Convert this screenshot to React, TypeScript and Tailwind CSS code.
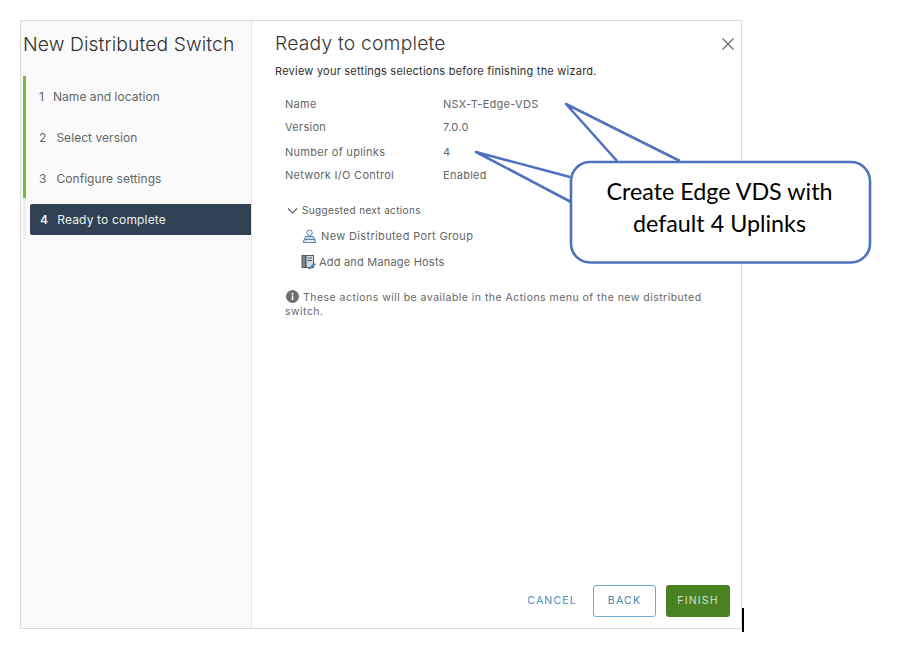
const font = "font-['Inter','Liberation_Sans',sans-serif]";

const steps = [
  { n: 1, label: "Name and location", gap: "gap-[9px]", h: "h-[41px]" },
  { n: 2, label: "Select version", gap: "gap-[10px]", h: "h-[41px]" },
  { n: 3, label: "Configure settings", gap: "gap-[10px]", h: "h-[40px] pt-[1px]" },
];

const summary = [
  { label: "Name", value: "NSX-T-Edge-VDS", h: "h-[23px]" },
  { label: "Version", value: "7.0.0", h: "h-[23px]" },
  { label: "Number of uplinks", value: "4", h: "h-[25px] pt-[1px]" },
  { label: "Network I/O Control", value: "Enabled", h: "h-[23px]" },
];

function PortGroupIcon() {
  return (
    <svg width="15" height="15" viewBox="0 0 15 15" fill="none" className="shrink-0">
      <circle cx="7.5" cy="3.8" r="2.8" fill="#eef3f7" stroke="#5b87ad" strokeWidth="1" />
      <path d="M1 13.5 L3.500 7.500 H11.500 L14 13.500 Z" fill="#c9dbe9" stroke="#5b87ad" strokeWidth="1" strokeLinejoin="round" />
      <path d="M2 10.500 H13" stroke="#5b87ad" strokeWidth="1" />
      <path d="M4 12 H11" stroke="#ffffff" strokeWidth="1" />
    </svg>
  );
}

function HostsIcon() {
  return (
    <svg width="16" height="16" viewBox="0 0 16 16" fill="none" className="shrink-0">
      <rect x="1" y="1.500" width="3.500" height="12" fill="#7d8890" stroke="#4f5a63" strokeWidth="1" />
      <rect x="5" y="1.500" width="7.500" height="12" fill="#d5dadd" stroke="#4f5a63" strokeWidth="1" />
      <path d="M6.500 4 H11 M6.500 6.500 H11" stroke="#4f5a63" strokeWidth="1" />
      <path d="M7 15 L13 8.500 L15 10.500 L9 15.500 Z" fill="#4d86b8" />
    </svg>
  );
}

function Callout() {
  return (
    <div className="absolute left-[470px] top-[95px] h-[175px] w-[405px]">
      <svg width="405" height="175" viewBox="0 0 405 175" fill="none" className="absolute inset-0">
        <path d="M147 67 L96 9 L210 67 Z M101 107 L6 57 L101 83 Z" fill="#ffffff" />
        <rect x="101" y="67" width="299" height="100.500" rx="19" fill="#ffffff" stroke="#4f71be" strokeWidth="2.600" />
        <path
          d="M147 66 L96 9 L210 66 M101 107 L6 57 L100 82"
          stroke="#4f71be"
          strokeWidth="2.600"
          strokeLinejoin="round"
        />
      </svg>
      <div className="absolute left-[101px] top-[67px] flex h-[100px] w-[299px] flex-col items-center justify-center pb-[10px] pr-[2px] font-['Lato',sans-serif] text-[23.300px] leading-[32px] text-black">
        <span>Create Edge VDS with</span>
        <span>default 4 Uplinks</span>
      </div>
    </div>
  );
}

export default function App() {
  return (
    <div className={`relative h-[662px] w-[916px] overflow-hidden bg-white pl-[20px] pt-[20px] ${font}`}>
      <div className="flex h-[609px] w-[722px] border border-[#dcdcdc] bg-white">
        <aside className="flex w-[231px] shrink-0 flex-col border-r border-[#e4e4e4] bg-[#fafafa]">
          <h1 className="ml-[2px] mt-[10px] h-[45px] whitespace-nowrap text-[19.300px] font-light leading-[26px] tracking-[0.1px] text-[#313131]">
            New Distributed Switch
          </h1>
          <div className="ml-[2px] flex flex-col border-l-[3px] border-[#eeeeee]">
            <div className="-ml-[3px] flex h-[122px] flex-col border-l-[3px] border-[#7cb83c] pl-[13px]">
              {steps.map((s) => (
                <div
                  key={s.n}
                  className={`flex ${s.h} items-center ${s.gap} text-[12px] tracking-[0.05px] text-[#666666]`}
                >
                  <span>{s.n}</span>
                  <span>{s.label}</span>
                </div>
              ))}
            </div>
            <div className="ml-[4px] mt-[6px] flex h-[31px] items-center gap-[9px] rounded-l-[2px] bg-[#2f4152] pl-[10px] text-[12px] tracking-[0.17px] text-[#eef1f3]">
              <span className="font-semibold">4</span>
              <span>Ready to complete</span>
            </div>
            <div className="h-[4px]" />
          </div>
        </aside>

        <main className="relative flex min-w-0 flex-1 flex-col pl-[23px] pr-[11px]">
          <button className="absolute right-[7px] top-[17px]">
            <svg width="12" height="12" viewBox="0 0 12 12" fill="none" className="block">
              <path d="M0.500 0.500 L11.500 11.500 M11.500 0.500 L0.500 11.500" stroke="#666666" strokeWidth="1.100" />
            </svg>
          </button>
          <h2 className="mt-[9px] h-[27px] text-[19.300px] font-light leading-[26px] tracking-[0.2px] text-[#383838]">
            Ready to complete
          </h2>
          <p className="mt-[6px] whitespace-nowrap text-[11px] leading-[16px] tracking-[0.23px] text-[#2f2f2f]">
            Review your settings selections before finishing the wizard.
          </p>
          <div className="mt-[14px] flex flex-col pl-[10px] text-[11px] tracking-[0.28px] text-[#666666]">
            {summary.map((r) => (
              <div key={r.label} className={`flex ${r.h} items-center`}>
                <span className="w-[158px]">{r.label}</span>
                <span>{r.value}</span>
              </div>
            ))}
          </div>
          <div className="mt-[16px] flex items-center gap-[4px] pl-[12px] text-[10px] tracking-[0.35px] text-[#5c5c5c]">
            <svg width="11" height="8" viewBox="0 0 11 8" fill="none">
              <path d="M1 1.500 L5.500 6 L10 1.500" stroke="#666666" strokeWidth="1.200" />
            </svg>
            <span>Suggested next actions</span>
          </div>
          <div className="mt-[10px] flex h-[16px] items-center gap-[4px] pl-[27px] text-[11px] tracking-[0.35px] text-[#666666]">
            <PortGroupIcon />
            <span>New Distributed Port Group</span>
          </div>
          <div className="mt-[10px] flex h-[16px] items-center gap-[2px] pl-[26px] text-[11px] tracking-[0.2px] text-[#666666]">
            <HostsIcon />
            <span>Add and Manage Hosts</span>
          </div>
          <p className="mt-[20px] w-[430px] pl-[10px] text-[10.500px] leading-[14px] tracking-[0.47px] text-[#666666]">
            <svg width="13" height="13" viewBox="0 0 13 13" className="ml-[1px] mr-[4px] inline-block align-[-2px]">
              <circle cx="6.500" cy="6.500" r="6.500" fill="#6e6e6e" />
              <rect x="5.700" y="5.500" width="1.600" height="4.500" fill="#ffffff" />
              <circle cx="6.500" cy="3.700" r="1" fill="#ffffff" />
            </svg>
            These actions will be available in the Actions menu of the new distributed switch.
          </p>
          <div className="mt-auto mb-[11px] flex items-center justify-end text-[10.500px] tracking-[1.2px]">
            <button className="mr-[16px] text-[#4a8bbd]">CANCEL</button>
            <button className="mr-[10px] h-[32px] w-[63px] rounded-[3px] border border-[#6ea9d3] bg-white text-[#3f7fb0]">
              BACK
            </button>
            <button className="h-[32px] w-[64px] rounded-[3px] bg-[#4a8123] text-[#d5e3c9]">FINISH</button>
          </div>
        </main>
      </div>
      <Callout />
      <div className="absolute left-[742px] top-[608px] h-[24px] w-[2px] bg-black" />
    </div>
  );
}
